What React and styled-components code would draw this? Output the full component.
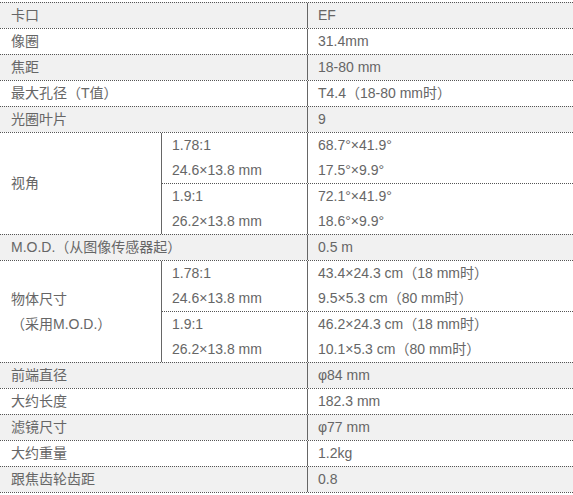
import React from 'react';
import styled, { createGlobalStyle } from 'styled-components';

const Global = createGlobalStyle`
  html, body { margin: 0; padding: 0; background: #fff; }
  body { padding-top: 2px; overflow: hidden; }
`;

const Sheet = styled.div`
  width: 573px;
  font-family: Arial, "Liberation Sans", "Noto Sans CJK SC", sans-serif;
  font-size: 14px;
  line-height: 25px;
  color: #666;
  border-bottom: 1px dotted #555;
`;

const Row = styled.div`
  display: grid;
  grid-template-columns: ${p => (p.$group ? '162px 1fr' : '308px 1fr')};
  border-top: 1px dotted #555;
  background: ${p => (p.$shade ? '#f1f1f1' : '#fff')};
`;

const Label = styled.div`
  box-sizing: border-box;
  padding-left: 11px;
  border-right: 1px solid #666;
  display: flex;
  flex-direction: column;
  justify-content: center;
  white-space: nowrap;
`;

const Value = styled.div`
  padding-left: 10px;
  white-space: nowrap;
`;

const SubList = styled.div`
  display: flex;
  flex-direction: column;
`;

const SubRow = styled.div`
  display: grid;
  grid-template-columns: 146px 1fr;
  & + & { border-top: 1px dotted #555; }
`;

const SubCell = styled.div`
  box-sizing: border-box;
  padding-left: 10px;
  border-right: 1px solid #666;
  white-space: nowrap;
`;

const Line = styled.div``;

const simple = (label, value) => ({ label, value });

const top = [
  simple('卡口', 'EF'),
  simple('像圈', '31.4mm'),
  simple('焦距', '18-80 mm'),
  simple('最大孔径（T值）', 'T4.4（18-80 mm时）'),
  simple('光圈叶片', '9'),
];

const bottom = [
  simple('前端直径', 'φ84 mm'),
  simple('大约长度', '182.3 mm'),
  simple('滤镜尺寸', 'φ77 mm'),
  simple('大约重量', '1.2kg'),
  simple('跟焦齿轮齿距', '0.8'),
];

const Simple = ({ label, value, shade }) => (
  <Row $shade={shade}>
    <Label>{label}</Label>
    <Value>{value}</Value>
  </Row>
);

const Group = ({ labels, subs, shade }) => (
  <Row $group $shade={shade}>
    <Label>
      {labels.map(l => <Line key={l}>{l}</Line>)}
    </Label>
    <SubList>
      {subs.map((s, i) => (
        <SubRow key={i}>
          <SubCell>
            {s.left.map(l => <Line key={l}>{l}</Line>)}
          </SubCell>
          <Value>
            {s.right.map(l => <Line key={l}>{l}</Line>)}
          </Value>
        </SubRow>
      ))}
    </SubList>
  </Row>
);

export default function App() {
  return (
    <>
      <Global />
      <Sheet>
        {top.map((r, i) => (
          <Simple key={r.label} {...r} shade={i % 2 === 0} />
        ))}
        <Group
          labels={['视角']}
          subs={[
            { left: ['1.78:1', '24.6×13.8 mm'], right: ['68.7°×41.9°', '17.5°×9.9°'] },
            { left: ['1.9:1', '26.2×13.8 mm'], right: ['72.1°×41.9°', '18.6°×9.9°'] },
          ]}
        />
        <Simple label="M.O.D.（从图像传感器起）" value="0.5 m" shade />
        <Group
          labels={['物体尺寸', '（采用M.O.D.）']}
          subs={[
            { left: ['1.78:1', '24.6×13.8 mm'], right: ['43.4×24.3 cm（18 mm时）', '9.5×5.3 cm（80 mm时）'] },
            { left: ['1.9:1', '26.2×13.8 mm'], right: ['46.2×24.3 cm（18 mm时）', '10.1×5.3 cm（80 mm时）'] },
          ]}
        />
        {bottom.map((r, i) => (
          <Simple key={r.label} {...r} shade={i % 2 === 0} />
        ))}
      </Sheet>
    </>
  );
}
